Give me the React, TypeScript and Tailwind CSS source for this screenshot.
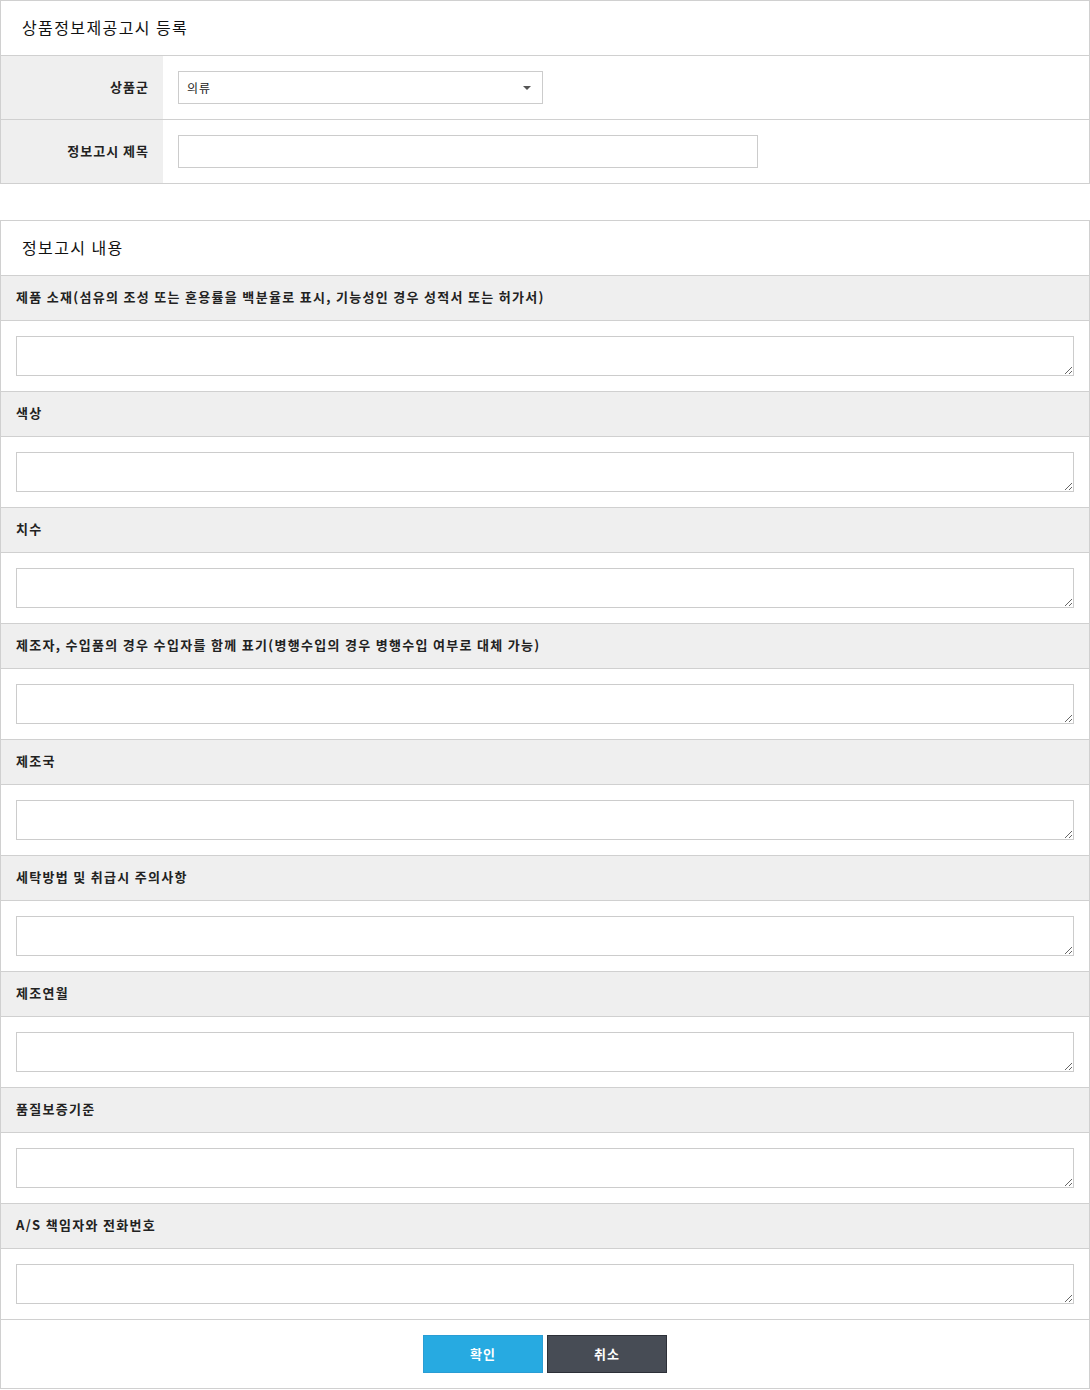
import React from 'react';

// 정보고시 항목 목록
const items: string[] = [
  '제품 소재(섬유의 조성 또는 혼용률을 백분율로 표시, 기능성인 경우 성적서 또는 허가서)',
  '색상',
  '치수',
  '제조자, 수입품의 경우 수입자를 함께 표기(병행수입의 경우 병행수입 여부로 대체 가능)',
  '제조국',
  '세탁방법 및 취급시 주의사항',
  '제조연월',
  '품질보증기준',
  'A/S 책임자와 전화번호',
];

const font = { fontFamily: '"Noto Sans CJK KR", "Noto Sans", sans-serif' };

const App: React.FC = () => {
  return (
    <div className="w-[1090px] bg-white text-[#222]" style={font}>
      {/* 상단 등록 영역 */}
      <div className="border border-[#d0d0d0]">
        <div className="h-[55px] flex items-center px-[21px] border-b border-[#d0d0d0]">
          <h2 className="-mt-[2px] text-[16px] tracking-[1.4px] text-[#111]">상품정보제공고시 등록</h2>
        </div>
        <div className="flex h-[64px] border-b border-[#d0d0d0]">
          <div className="w-[162px] bg-[#efefef] flex items-center justify-end pr-[14px] pb-[2px] text-[13px] tracking-[1px] font-bold">
            상품군
          </div>
          <div className="flex items-center pl-[15px]">
            <div className="relative w-[365px] h-[33px]">
              <select
                defaultValue="의류"
                className="appearance-none w-full h-full border border-[#cccccc] bg-white pl-[8px] text-[12px] tracking-[1px] text-[#222] outline-none"
              >
                <option>의류</option>
                <option>구두/신발</option>
                <option>가방</option>
              </select>
              <span className="pointer-events-none absolute right-[12px] top-[15px] w-0 h-0 border-l-[4px] border-r-[4px] border-t-[4px] border-l-transparent border-r-transparent border-t-[#555]" />
            </div>
          </div>
        </div>
        <div className="flex h-[63px]">
          <div className="w-[162px] bg-[#efefef] flex items-center justify-end pr-[14px] pb-[2px] text-[13px] tracking-[1px] font-bold">
            정보고시 제목
          </div>
          <div className="flex items-center pl-[15px]">
            <input type="text" className="w-[580px] h-[33px] border border-[#cccccc] px-[8px] text-[12px] outline-none" />
          </div>
        </div>
      </div>

      {/* 정보고시 내용 영역 */}
      <div className="mt-[36px] border border-[#d0d0d0]">
        <div className="h-[55px] flex items-center px-[21px] border-b border-[#d0d0d0]">
          <h2 className="-mt-[2px] text-[16px] tracking-[1.4px] text-[#111]">정보고시 내용</h2>
        </div>
        {items.map((item) => (
          <div key={item}>
            <div className="h-[45px] bg-[#efefef] flex items-center px-[15px] pb-[2px] border-b border-[#d0d0d0] text-[13px] tracking-[1.3px] font-bold">
              {item}
            </div>
            <div className="px-[15px] py-[15px] border-b border-[#d0d0d0]">
              <textarea className="block w-full h-[40px] border border-[#cccccc] p-[6px] text-[12px] outline-none resize-y" />
            </div>
          </div>
        ))}
        {/* 버튼 */}
        <div className="h-[68px] flex items-center justify-center gap-[4px]">
          <button className="w-[120px] h-[38px] bg-[#27aae1] border border-[#2a9dd4] text-white text-[13px] tracking-[1px] font-bold">
            확인
          </button>
          <button className="w-[120px] h-[38px] bg-[#474c55] border border-[#2d3038] text-white text-[13px] tracking-[1px] font-bold">
            취소
          </button>
        </div>
      </div>
    </div>
  );
};

export default App;
